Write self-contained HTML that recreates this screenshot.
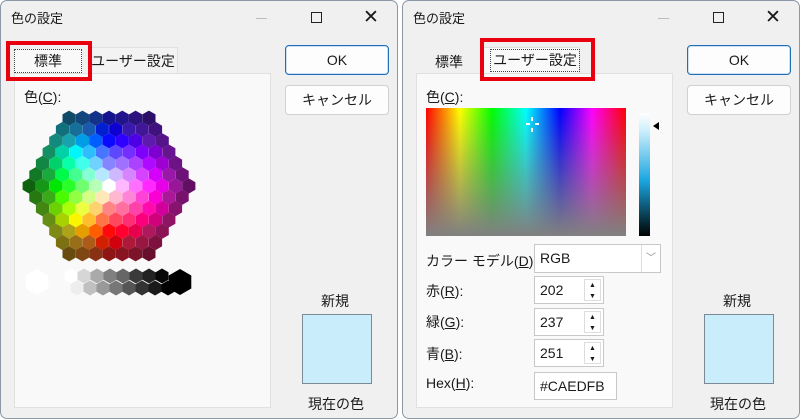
<!DOCTYPE html>
<html><head><meta charset="utf-8"><style>
*{box-sizing:border-box;margin:0;padding:0}
body{width:800px;height:419px;background:#fff;font-family:"Liberation Sans","Noto Sans CJK JP",sans-serif;font-size:13px;color:#1a1a1a;position:relative;overflow:hidden}
.dlg{position:absolute;top:0;width:398px;height:419px;background:#f0f0f0;border:1px solid #8a98a8;border-radius:7px}
.abs{position:absolute}
.title{left:10px;top:7px;font-size:13px}
.panel{position:absolute;left:13px;top:72px;width:257px;height:335px;background:#f9f9f9;border:1px solid #e0e0e0}
.btn{position:absolute;left:284px;width:104px;height:30px;background:#fdfdfd;border:1px solid #d0d0d0;border-radius:4px;text-align:center;line-height:28px;font-size:14px}
.ok{border:1px solid #1f6fb8;box-shadow:inset 0 0 0 1px #cfe0f0}
.sw{position:absolute;left:301px;top:313px;width:70px;height:70px;background:#caedfb;border:1px solid #7a8a96}
.red{position:absolute;border:4px solid #e8000f}
.field{position:absolute;background:#fff;border:1px solid #c8c8c8;font-size:14px;padding-left:5px;line-height:27px}
.u{text-decoration:underline}
</style></head><body>
<div class="dlg" style="left:0">
 <div class="abs title">色の設定</div>
 <div class="abs" style="left:255px;top:17px;width:11px;height:1px;background:#bbb"></div>
 <div class="abs" style="left:310px;top:11px;width:11px;height:11px;border:1.5px solid #222"></div>
 <div class="abs" style="left:362px;top:5px;font-size:19px">✕</div>
 <div class="abs" style="left:87px;top:46px;width:90px;height:27px;background:#f3f3f3;border:1px solid #e0e0e0;border-bottom:none;text-align:center;line-height:26px;font-size:14px">ユーザー設定</div>
 <div class="panel"></div>
 <div class="abs" style="left:13px;top:48px;width:68px;height:24px;background:#f9f9f9;border:1px dotted #444;text-align:center;line-height:22px;font-size:14px">標準</div>
 <div class="red" style="left:5px;top:40px;width:86px;height:40px"></div>
 <div class="abs" style="left:23px;top:86px;font-size:14px">色(<span class="u">C</span>):</div>
 <svg id="hex" class="abs" style="left:0;top:0" width="270" height="300"></svg>
 <div class="btn ok" style="top:44px">OK</div>
 <div class="btn" style="top:84px">キャンセル</div>
 <div class="abs" style="left:320px;top:290px;font-size:14px">新規</div>
 <div class="sw"></div>
 <div class="abs" style="left:307px;top:393px;font-size:14px">現在の色</div>
</div>
<div class="dlg" style="left:402px">
 <div class="abs title">色の設定</div>
 <div class="abs" style="left:255px;top:17px;width:11px;height:1px;background:#bbb"></div>
 <div class="abs" style="left:310px;top:11px;width:11px;height:11px;border:1.5px solid #222"></div>
 <div class="abs" style="left:362px;top:5px;font-size:19px">✕</div>
 <div class="abs" style="left:32px;top:51px;font-size:14px">標準</div>
 <div class="panel"></div>
 <div class="abs" style="left:77px;top:46px;width:100px;height:26px;background:#f9f9f9;border:1px solid #e0e0e0;border-bottom:none"></div>
 <div class="abs" style="left:87px;top:48px;width:90px;height:23px;border:1px dotted #444;text-align:center;line-height:21px;font-size:14px">ユーザー設定</div>
 <div class="red" style="left:77px;top:37px;width:115px;height:43px"></div>
 <div class="abs" style="left:23px;top:86px;font-size:14px">色(<span class="u">C</span>):</div>
 <div class="abs" style="left:23px;top:107px;width:200px;height:128px;background:linear-gradient(to bottom,rgba(128,128,128,0),#808080),linear-gradient(to right,#f00,#ff0 17%,#0f0 33%,#0ff 50%,#00f 67%,#f0f 83%,#f00)"></div>
 <div class="abs" style="left:128px;top:116px;width:2px;height:4px;background:#fff"></div>
 <div class="abs" style="left:123px;top:122px;width:4px;height:2px;background:#fff"></div>
 <div class="abs" style="left:132px;top:122px;width:4px;height:2px;background:#fff"></div>
 <div class="abs" style="left:128px;top:127px;width:2px;height:4px;background:#fff"></div>
 <div class="abs" style="left:236px;top:112px;width:11px;height:123px;background:linear-gradient(#fff,#caedfb 15%,#1aa6e0 55%,#000)"></div>
 <div class="abs" style="left:250px;top:121px;width:0;height:0;border-top:4px solid transparent;border-bottom:4px solid transparent;border-right:6px solid #000"></div>
 <div class="abs" style="left:23px;top:250px;font-size:14px">カラー モデル(<span class="u">D</span>):</div>
 <div class="field" style="left:131px;top:243px;width:127px;height:29px">RGB<div class="abs" style="right:0;top:0;width:19px;height:27px;border-left:1px solid #ddd;color:#888;font-size:10px;text-align:center">﹀</div></div>
 <div class="abs" style="left:23px;top:280px;font-size:14px">赤(<span class="u">R</span>):</div>
 <div class="abs" style="left:23px;top:311px;font-size:14px">緑(<span class="u">G</span>):</div>
 <div class="abs" style="left:23px;top:343px;font-size:14px">青(<span class="u">B</span>):</div>
 <div class="abs" style="left:23px;top:374px;font-size:14px">Hex(<span class="u">H</span>):</div>
 <div class="field" style="left:131px;top:275px;width:70px;height:28px">202</div>
 <div class="field" style="left:131px;top:307px;width:70px;height:28px">237</div>
 <div class="field" style="left:131px;top:338px;width:70px;height:28px">251</div>
 <div class="field" style="left:131px;top:371px;width:83px;height:28px">#CAEDFB</div>
 <div class="abs" style="left:181px;top:278px;width:17px;height:22px;font-size:7px;line-height:11px;text-align:center;border:1px solid #ddd">▲<br>▼</div>
 <div class="abs" style="left:181px;top:310px;width:17px;height:22px;font-size:7px;line-height:11px;text-align:center;border:1px solid #ddd">▲<br>▼</div>
 <div class="abs" style="left:181px;top:341px;width:17px;height:22px;font-size:7px;line-height:11px;text-align:center;border:1px solid #ddd">▲<br>▼</div>
 <div class="btn ok" style="top:44px">OK</div>
 <div class="btn" style="top:84px">キャンセル</div>
 <div class="abs" style="left:320px;top:290px;font-size:14px">新規</div>
 <div class="sw"></div>
 <div class="abs" style="left:307px;top:393px;font-size:14px">現在の色</div>
</div>
<script>
var s=document.getElementById('hex'),h='';
function hx(cx,cy,r,f){var p=[];for(var k=0;k<6;k++){var a=Math.PI/180*(60*k-90);p.push((cx+r*Math.cos(a)).toFixed(1)+','+(cy+r*Math.sin(a)).toFixed(1));}h+='<polygon points="'+p.join(' ')+'" fill="'+f+'"/>';}
var CX=108,CY=185;
for(var r=-6;r<=6;r++){var n=13-Math.abs(r);for(var i=0;i<n;i++){var x=CX+(i-(n-1)/2)*13.3,y=CY+r*11.3;
var dx=x-CX,dy=y-CY,d=Math.sqrt(dx*dx+dy*dy)/13.3;var th=(Math.atan2(dx,-dy)*180/Math.PI+360)%360;
var hue=th<180?240+th*120/180:360+(th-180)*240/180;hue=hue%360;
var l=d<3.5?100-d*14:Math.max(20,50-(d-3.5)*11);var sat=d<0.5?0:(d>4.5?75:100);
hx(x,y,7.6,'hsl('+hue.toFixed(0)+','+sat+'%,'+l.toFixed(0)+'%)');}}
hx(36,281,13,'#fff');hx(179,281,13,'#000');
for(var i=0;i<8;i++){hx(70+i*13,275,7.5,['#fff','#d6d6d6','#aaa','#808080','#666','#3a3a3a','#222','#080808'][i]);hx(76+i*13,287,7.5,['#eee','#c0c0c0','#999','#777','#555','#333','#1a1a1a','#000'][i]);}
s.innerHTML=h;
</script>
</body></html>
